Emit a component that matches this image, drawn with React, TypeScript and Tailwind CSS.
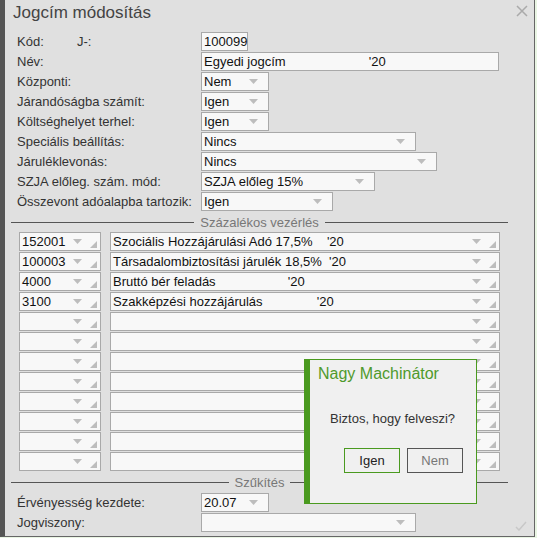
import React from "react";

const font = { fontFamily: '"Liberation Sans", Arial, sans-serif' };

const Arrow = () => (
  <svg width="9" height="5" viewBox="0 0 9 5" className="shrink-0">
    <path d="M0 0 H9 L4.5 5 Z" fill="#bdbdbd" />
  </svg>
);

const Grip = () => (
  <svg width="7" height="7" viewBox="0 0 7 7" className="shrink-0">
    <path d="M7 0 V7 H0 Z" fill="#bdbdbd" />
  </svg>
);

const Field = ({ w, children, arrow }: { w: string; children?: React.ReactNode; arrow?: boolean }) => (
  <div className={`${w} h-[19px] flex items-center bg-[#f8f8f8] border border-[#a9a9a9] pl-[2px] pr-[10px] text-[13px] text-[#111] whitespace-pre`}>
    <span className="flex-1 leading-none">{children}</span>
    {arrow && <Arrow />}
  </div>
);

const Row = ({ label, children }: { label: React.ReactNode; children: React.ReactNode }) => (
  <div className="h-[20px] flex items-start">
    <div className="w-[184px] h-[19px] flex items-center text-[13px] text-[#333]">{label}</div>
    {children}
  </div>
);

const Divider = ({ title }: { title: string }) => (
  <div className="h-[20px] flex items-center pl-[6px] w-[503px]">
    <div className="flex-1 h-px bg-[#555]" />
    <span className="px-[6px] text-[13px] text-[#777] leading-none">{title}</span>
    <div className="flex-1 h-px bg-[#555]" />
  </div>
);

const GridRow = ({ code, name }: { code?: string; name?: string }) => (
  <div className="h-[20px] flex items-start pl-[14px] gap-[9px]">
    <div className="w-[82px] h-[19px] flex items-center bg-[#f8f8f8] border border-[#a9a9a9] pl-[2px] pr-[3px] text-[13px] text-[#111]">
      <span className="flex-1 leading-none">{code}</span>
      <Arrow />
      <span className="w-[8px]" />
      <div className="self-end mb-[2px]"><Grip /></div>
    </div>
    <div className="w-[390px] h-[19px] flex items-center bg-[#f8f8f8] border border-[#a9a9a9] pl-[2px] pr-[3px] text-[13px] text-[#111] whitespace-pre">
      <span className="flex-1 leading-none">{name}</span>
      <Arrow />
      <span className="w-[8px]" />
      <div className="self-end mb-[2px]"><Grip /></div>
    </div>
  </div>
);

const rows: [string, string][] = [
  ["152001", "Szociális Hozzájárulási Adó 17,5%    '20"],
  ["100003", "Társadalombiztosítási járulék 18,5%  '20"],
  ["4000", "Bruttó bér feladás                    '20"],
  ["3100", "Szakképzési hozzájárulás               '20"],
];

export default function App() {
  const all = [...rows, ...Array.from({ length: 8 }, () => ["", ""] as [string, string])];
  return (
    <div className="w-[537px] h-[538px] bg-[#e9f5e3] relative overflow-hidden" style={font}>
      <div className="w-[535px] h-[537px] bg-[#e0e0e0] border-l-[5px] border-l-[#555] border-r border-b border-r-[#666] border-b-[#666] relative">
        <div className="h-[32px] flex items-start justify-between pl-[8px] pr-[6px] pt-[3px]">
          <span className="text-[17px] text-[#444] leading-[20px]">Jogcím módosítás</span>
          <svg width="12" height="12" viewBox="0 0 12 12" className="mt-[2px]">
            <path d="M1 1 L11 11 M11 1 L1 11" stroke="#aaa" strokeWidth="1.5" />
          </svg>
        </div>
        <div className="pl-[12px]">
          <Row label={<><span className="w-[60px]">Kód:</span><span>J-:</span></>}>
            <Field w="w-[47px]">100099</Field>
          </Row>
          <Row label="Név:">
            <Field w="w-[298px]">{"Egyedi jogcím                       '20"}</Field>
          </Row>
          <Row label="Központi:">
            <Field w="w-[68px]" arrow>Nem</Field>
          </Row>
          <Row label="Járandóságba számít:">
            <Field w="w-[68px]" arrow>Igen</Field>
          </Row>
          <Row label="Költséghelyet terhel:">
            <Field w="w-[68px]" arrow>Igen</Field>
          </Row>
          <Row label="Speciális beállítás:">
            <Field w="w-[215px]" arrow>Nincs</Field>
          </Row>
          <Row label="Járuléklevonás:">
            <Field w="w-[236px]" arrow>Nincs</Field>
          </Row>
          <Row label="SZJA előleg. szám. mód:">
            <Field w="w-[174px]" arrow>SZJA előleg 15%</Field>
          </Row>
          <Row label="Összevont adóalapba tartozik:">
            <Field w="w-[132px]" arrow>Igen</Field>
          </Row>
        </div>
        <div className="h-[20px]">
          <Divider title="Százalékos vezérlés" />
        </div>
        <div>
          {all.map(([c, n], i) => (
            <GridRow key={i} code={c} name={n} />
          ))}
        </div>
        <Divider title="Szűkítés" />
        <div className="pl-[12px] pt-[1px]">
          <Row label="Érvényesség kezdete:">
            <Field w="w-[68px]" arrow>20.07</Field>
          </Row>
          <Row label="Jogviszony:">
            <Field w="w-[215px]" arrow />
          </Row>
        </div>
        <svg width="12" height="10" viewBox="0 0 12 10" className="absolute right-[7px] bottom-[5px]">
          <path d="M1 6 L4 9 L11 1" stroke="#c8c8c8" strokeWidth="1.5" fill="none" />
        </svg>

        {/* confirm dialog */}
        <div className="absolute left-[299px] top-[359px] w-[173px] h-[145px] bg-[#f0f0f0] border border-[#4a9a1f] border-l-[6px] flex flex-col">
          <div className="pl-[8px] pt-[4px] text-[16px] text-[#4f9a2c] leading-[20px]">Nagy Machinátor</div>
          <div className="pl-[20px] pt-[27px] text-[13px] text-[#333] leading-[16px]">Biztos, hogy felveszi?</div>
          <div className="flex gap-[7px] pl-[34px] pt-[21px]">
            <button className="w-[56px] h-[25px] border border-[#4a9a1f] bg-[#f0f0f0] text-[13px] text-[#222]">Igen</button>
            <button className="w-[56px] h-[25px] border border-[#555] bg-[#f0f0f0] text-[13px] text-[#777]">Nem</button>
          </div>
        </div>
      </div>
    </div>
  );
}
